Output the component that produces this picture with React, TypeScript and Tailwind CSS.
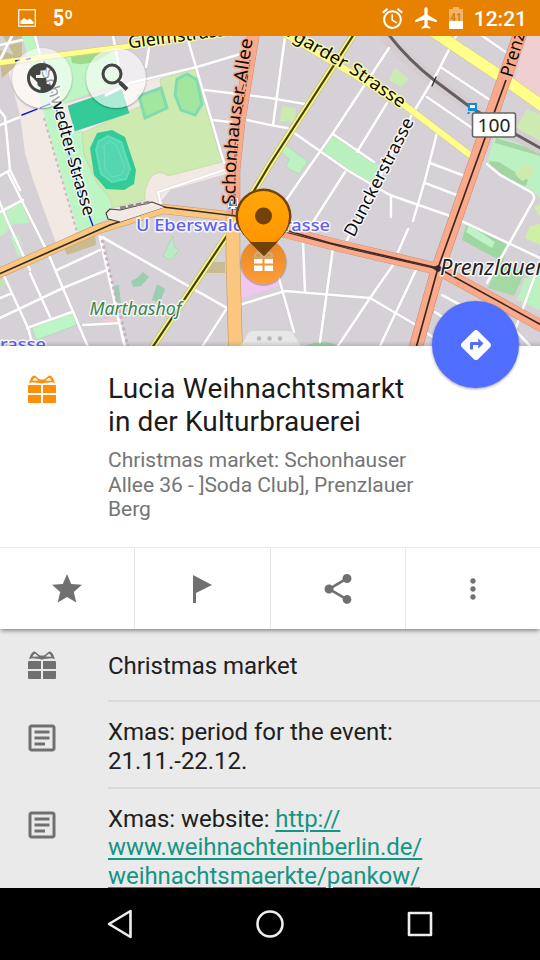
import type { ReactNode } from "react";
import {
  MdAccessAlarm,
  MdAirplanemodeActive,
  MdDirections,
  MdMoreVert,
  MdOutlineArticle,
  MdPublic,
  MdShare,
  MdStar,
} from "react-icons/md";

const STREETS = [
  "M149 48L146 67",
  "M188 40L224 163",
  "M113 36L122 82",
  "M106 95L130 83L197 67L247 52",
  "M205 90L270 98L305 104",
  "M213 120L237 123M247 120L270 125L287 128L347 170L390 195L453 217L540 258",
  "M285 37L273 125",
  "M389 48L333 133L300 180L283 205",
  "M387 103L357 152",
  "M333 134L374 162",
  "M345 172L313 222",
  "M457 34L437 73L413 113L347 240",
  "M442 68L493 102",
  "M427 97L472 128",
  "M481 35L507 53",
  "M437 133L425 180L413 221",
  "M430 163L470 178",
  "M408 229L398 252",
  "M425 183L462 197",
  "M391 195V217",
  "M487 164L500 175L531 192Q536 196 533 201L487 283",
  "M303 242L305 292",
  "M333 248L320 342",
  "M239 305L285 291L370 298L416 325",
  "M393 265L370 298L338 346",
  "M416 270L380 346",
  "M278 275L294 332",
  "M442 295L475 313M435 312L450 322M425 332L436 339M540 262L515 330L530 346",
  "M57 270L100 250",
  "M-2 319L63 288L107 270",
  "M-2 299L10 294",
  "M27 328L72 312",
  "M48 253L88 347",
  "M30 273L50 317",
  "M4 276L28 328L33 346",
  "M8 173L48 253",
  "M-2 198L7 220L30 270",
  "M-2 213L23 200",
  "M102 237L227 308L202 347",
  "M161 205L158 192L230 168",
  "M83 325L122 323",
  "M-2 108L5 117L10 170L-2 177M10 170L20 190",
  "M-2 126L20 117",
  "M35 36L42 62M12 36L0 60M0 45L22 40",
];

function MapLabel({
  d,
  id,
  length,
  size = 17.5,
  children,
}: {
  d: string;
  id: string;
  length: number;
  size?: number;
  children: string;
}) {
  return (
    <>
      <path id={id} d={d} fill="none" stroke="none" />
      <text fontSize={size} textLength={length} lengthAdjust="spacingAndGlyphs">
        <textPath href={"#" + id}>{children}</textPath>
      </text>
    </>
  );
}

function CityMap() {
  return (
    <svg viewBox="0 36 540 310" className="block h-[310px] w-[540px]">
      <rect y="36" width="540" height="310" fill="#d6d1d6" />

      {/* land use */}
      <path d="M7 67L40 60L79 231L56 243L33 180L25 153L20 115Z" fill="#f2e9e4" />
      <path d="M60 105L130 85L193 68L200 90L222 163L233 172L170 190L157 207L110 222L80 150Z" fill="#f2e9e4" />
      <path d="M22 36H34L41 61L115 50L122 82L62 104L68 131L83 131L92 172L110 198L111 217L78 232L45 118Z" fill="#bef5c4" />
      <path d="M71 57L115 50L97 61Q84 66 72 63Z" fill="#a0d98b" />
      <path d="M82 133L162 96L160 79L195 69L222 162L168 176Q160 169 151 177Q143 190 145 200L112 208L110 198L97 183L84 155Z" fill="#cdebb0" stroke="#b5cda0" strokeWidth=".5" />
      <path d="M68 106L121 88L129 113L75 131Z" fill="#33cc99" stroke="#2bb98a" strokeWidth=".5" />
      <path d="M97 133L112 130L125 137L136 170L134 184L124 190L106 189L94 175L90 148Z" fill="#33cc99" />
      <path d="M99 141L108 136L121 142L130 169L126 179L112 182L101 174L96 150Z" fill="#54d6b0" stroke="#62deb7" strokeWidth="2" />
      <path d="M104 145L110 141L117 146L125 168L121 175L112 177L105 169Z" fill="#54d6b0" stroke="#70dfbb" strokeWidth="1" />
      <path d="M139 96L161 88L167 108L145 118Z" fill="#a2e6a0" stroke="#80dcae" strokeWidth="3" />
      <path d="M177 79L187 74L197 80L202 104L195 115L181 110L175 95Z" fill="#a2e6a0" stroke="#80dcae" strokeWidth="3" />
      <path d="M3 36H22V60L2 78L0 62V50L14 55Z" fill="#c9bb91" />
      <path d="M2 207L22 201L29 223L14 224L2 236L-1 236V218Z" fill="#bcf2c1" />
      <path d="M10 236L19 235L25 259L18 256Z" fill="#bcf2c1" />
      <path d="M0 281L4 279V285L0 287Z" fill="#bce8a9" />
      <path d="M32 328L72 312L77 325L36 340Z" fill="#bef5c4" stroke="#a5d0a8" strokeWidth=".5" />
      <path d="M173 236L174 247L179 250L174 257L170 260L163 256Z" fill="#bbebc4" stroke="#a2cdaa" strokeWidth=".5" />
      <path d="M131 281L137 278L143 272L149 277L141 286L133 287Z" fill="#99cfaf" />
      <path d="M152 300L157 284L165 289L160 303Z" fill="#99cfaf" />
      <path d="M114 286L119 285L121 303L115 302Z" fill="#99cfaf" />
      <path d="M64 248L95 236L96 245L67 255Z" fill="#c9bb91" />
      <path d="M207 262H225V273H203Z" fill="#c9bb91" />
      <path d="M101 320L117 316L119 322H103Z" fill="#f0cccc" />
      <path d="M282 106L296 108L295 122L280 121Z" fill="#cdebb0" />
      <path d="M395 68L409 79L401 87L389 80Z" fill="#cdebb0" />
      <path d="M285 145L308 161L299 174L286 167L289 159L280 151Z" fill="#bcf2c1" stroke="#a6cdaa" strokeWidth=".5" />
      <path d="M333 136L380 166L372 186L347 170L323 152Z" fill="#baf0be" />
      <path d="M526 36H540V102L514 83Z" fill="#efcfd0" />
      <path d="M516 128L527 109L540 115V145L520 135Z" fill="#cdebb0" />
      <path d="M494 136L540 150V198L534 192L520 185L487 164Z" fill="#bcf2c1" />
      <path d="M496 138L540 151V156L495 143Z" fill="#a6d5a5" />
      <path d="M490 161L499 162L528 180L526 186L515 183L500 174L487 166Z" fill="#a3d5a2" />
      <path d="M515 174L521 166L534 166L533 176L522 181Z" fill="#cdebb0" />
      <path d="M530 226L540 224V245L525 238ZM534 207L540 204V216Z" fill="#cdf0a5" />
      <path d="M467 222L508 244L503 262L462 240Z" fill="#9ed7a2" />
      <path d="M469 225L495 242L492 248L480 241L466 232Z" fill="#bff2c6" />
      <path d="M499 262L525 272L514 296L488 288Z" fill="#a4d9a5" />
      <path d="M525 278L540 275V310L517 300Z" fill="#bcf2c1" />
      <path d="M241 267L275 268L279 286L241 299Z" fill="#efc7ef" />
      <path d="M304 346Q324 338 338 346Z" fill="#9bd5a3" />

      {/* railway */}
      <path d="M380 31C397 50 420 70 434 80L470 107L517 135L542 149" fill="none" stroke="#d6cbcf" strokeWidth="12" />

      {/* minor streets */}
      <g fill="none" strokeLinecap="round">
        {STREETS.map((d) => (
          <path key={d} d={d} stroke="#cdc8cc" strokeWidth="3.4" />
        ))}
        {STREETS.map((d) => (
          <path key={d} d={d} stroke="#fff" strokeWidth="2.6" />
        ))}
        <path d="M100 237L125 347" stroke="#fff" strokeWidth="3" />
        <path d="M102 240L128 347" stroke="#c9afc5" strokeWidth="3" strokeDasharray="3 3" strokeLinecap="butt" />
        <path d="M44 118L77 232" stroke="#cbb9c0" strokeWidth="2" strokeDasharray="3 3" strokeLinecap="butt" />
        <path d="M22 115L50 104M44 62L60 122L80 191L93 226" stroke="#1414df" strokeWidth="1.400" strokeDasharray="16 4" />
        <path d="M386 31C400 50 420 69 434 80L470 107L517 135L542 149" stroke="#606060" strokeWidth="3" />
        <path d="M432 86L436 77" stroke="#333" strokeWidth="1.300" />
      </g>

      {/* main roads */}
      <g fill="none" strokeLinejoin="round">
        <path d="M-2 63L130 46L200 31" stroke="#c9c37d" strokeWidth="6" />
        <path d="M-2 63L130 46L200 31" stroke="#ffff89" strokeWidth="5.200" />
        <path d="M15 61L34 58" stroke="#1414df" strokeWidth="1.300" strokeDasharray="5 6" />
        <path d="M280 31L343 68L403 104L482 164" stroke="#c9c37d" strokeWidth="7" />
        <path d="M280 31L343 68L403 104L482 164" stroke="#ffff89" strokeWidth="6.200" />
        <path d="M425 26L503 78L545 108" stroke="#c9c37d" strokeWidth="12" />
        <path d="M425 26L503 78L545 108" stroke="#ffff89" strokeWidth="11.200" />
        <path d="M356 31L270 164L230 231L152 348" stroke="#b8b278" strokeWidth="7" />
        <path d="M356 31L270 164L230 231L152 348" stroke="#f8f68a" strokeWidth="6" />
        <path d="M356 31L270 164L230 231L152 348" stroke="#45430f" strokeWidth="2.200" />
        <path d="M-3 274L98 229L163 209L236 217" stroke="#c39a63" strokeWidth="10" />
        <path d="M-3 274L98 229L163 209L236 217" stroke="#fbc780" strokeWidth="9" />
        <path d="M233 212V260L235.500 348" stroke="#c39a63" strokeWidth="14.500" />
        <path d="M233 212V260L235.500 348" stroke="#fbc780" strokeWidth="13.300" />
        <path d="M270 228L340 246L438 269L545 328" stroke="#c48976" strokeWidth="12" />
        <path d="M523 26L500 91L438 269L415 350" stroke="#c48976" strokeWidth="14" />
        <path d="M254 31L239 122L234 170V216" stroke="#c48976" strokeWidth="12.500" />
        <path d="M270 228L340 246L438 269L545 328" stroke="#faa98a" strokeWidth="11.200" />
        <path d="M523 26L500 91L438 269L415 350" stroke="#faa98a" strokeWidth="13" />
        <path d="M254 31L239 122L234 170V216" stroke="#faa98a" strokeWidth="11.700" />
        <path d="M-3 275L110 225L163 207L236 216" stroke="#382d22" strokeWidth="1.700" />
        <path d="M120 222L108 219L106 213L110 209L120 210L152 202L165 207" fill="#f2e9e4" stroke="#453f3c" strokeWidth="1.100" />
        <path d="M120 208L151 202" stroke="#888" strokeWidth="3" strokeDasharray="6 2" />
        <path d="M285 230L330 243L438 268L545 327" stroke="#3d2923" strokeWidth="1.600" />
        <path d="M285 232L350 249L438 269" stroke="#3d2923" strokeWidth="1.200" />
        <path d="M506 80L438 268L416 348" stroke="#3d2923" strokeWidth="1.700" />
        <path d="M248 70L242 90L238 140L232 216M250 60L244 100L235 145V210" stroke="#63453c" strokeWidth="1.100" strokeDasharray="12 3" />
        <path d="M432 268L438 265L445 269L438 272Z" fill="#3d2923" />
      </g>

      {/* stops */}
      <g fill="#168bd0">
        <path d="M468 103H477V111H468ZM468 112H470L469 114H467ZM475 112H477L478 114H476Z" />
        <path d="M470 105H475V108H470Z" fill="#fff" />
        <path d="M228 198H238V209H228Z" fill="#fff" />
        <path d="M229 199H237V206H229ZM229 207H231L230 209H228ZM235 207H237L238 209H236Z" />
        <path d="M231 201H235V204H231Z" fill="#fff" />
      </g>

      {/* names */}
      <g
        className="font-['Noto_Sans',sans-serif]"
        fill="#0c0c0c"
        stroke="#fff"
        strokeOpacity=".85"
        strokeWidth="2.800"
        strokeLinejoin="round"
        paintOrder="stroke"
      >
        <g stroke="#ffff9c">
          <MapLabel id="gleim" d="M129 48.500L245 33" length={108}>Gleimstrasse</MapLabel>
          <MapLabel id="stargarder" d="M262 21L303 46L350 73L420 122" length={164}>Stargarder Strasse</MapLabel>
        </g>
        <MapLabel id="schwedter" d="M41 71L53 107L69 166L85 220L91 245" length={152}>Schwedter Strasse</MapLabel>
        <g stroke="#faa98a">
          <MapLabel id="schonhauser" d="M235 205L236 165L240 121L254 30" length={167} size={18}>Schonhauser Allee</MapLabel>
          <MapLabel id="prenzlauerAllee" d="M512 78L537 -6" length={50} size={18}>Prenzl</MapLabel>
        </g>
        <MapLabel id="duncker" d="M354 238L382 184L419 112" length={131}>Dunckerstrasse</MapLabel>
        <text x="136" y="231" fontSize="17" fontWeight="500" fill="#6262ee" textLength="194" lengthAdjust="spacingAndGlyphs">
          U Eberswalder Strasse
        </text>
        <text x="0" y="349.500" fontSize="17" fontWeight="500" fill="#6262ee" textLength="46" lengthAdjust="spacingAndGlyphs">
          rasse
        </text>
        <text x="89.500" y="314.500" fontSize="18" fontStyle="italic" fill="#398650" textLength="92" lengthAdjust="spacingAndGlyphs">
          Marthashof
        </text>
        <text x="440" y="275" fontSize="22.500" fontStyle="italic" fill="#222" textLength="155" lengthAdjust="spacingAndGlyphs">
          Prenzlauer Berg
        </text>
      </g>
      <rect x="472.500" y="113" width="43" height="24" rx="2" fill="#fff" stroke="#666" strokeWidth="1.600" />
      <text x="494" y="131.500" textAnchor="middle" fontSize="18.500" fill="#222" textLength="33" lengthAdjust="spacingAndGlyphs" className="font-['Noto_Sans',sans-serif]">
        100
      </text>

      {/* selected place */}
      <defs>
        <linearGradient id="pinFill" x1="0" y1="0" x2="0" y2="1">
          <stop offset="0" stopColor="#ffa70a" />
          <stop offset="1" stopColor="#ff9500" />
        </linearGradient>
        <linearGradient id="poiFill" x1="0" y1="0" x2="0" y2="1">
          <stop offset="0" stopColor="#e48528" />
          <stop offset="1" stopColor="#ff9d34" />
        </linearGradient>
      </defs>
      <circle cx="263.500" cy="262.500" r="23.500" fill="#735b55" opacity=".35" />
      <circle cx="263.500" cy="261.500" r="22.500" fill="url(#poiFill)" />
      <path d="M254 259H262.500V263.500H254ZM264.500 259H273V263.500H264.500ZM254 265.500H262.500V271H254ZM264.500 265.500H273V271H264.500Z" fill="#fff" />
      <path d="M255 257.500Q254 255 258 252L263.500 257L269 252Q273 255 272 257.500Z" fill="none" stroke="#c7ad8b" strokeWidth="2" />
      <path d="M235.500 216.500A28 28 0 1 1 291.500 216.500Q291.500 227 279 240L264 256L248 240Q235.500 227 235.500 216.500Z" fill="#734209" />
      <path d="M238 216.500A25.500 25.500 0 1 1 289 216.500Q289 231 276 242H251Q238 231 238 216.500Z" fill="url(#pinFill)" />
      <path d="M249 241.500Q263.500 243.500 278 241.500L264 256Z" fill="#734209" />
      <circle cx="263.500" cy="216" r="8.500" fill="#734209" />

      {/* drawer handle */}
      <path d="M239 346Q243 344 247 335Q249 331 253 331H288Q292 331 294 335L301 346Z" fill="#e7e7e7" />
      <g fill="#b8b8b8">
        <circle cx="259" cy="338.500" r="2.200" />
        <circle cx="269.500" cy="338.500" r="2.200" />
        <circle cx="280" cy="338.500" r="2.200" />
      </g>
      <defs>
        <linearGradient id="edge" x1="0" y1="0" x2="0" y2="1">
          <stop offset="0" stopColor="#000" stopOpacity="0" />
          <stop offset="1" stopColor="#000" stopOpacity=".13" />
        </linearGradient>
      </defs>
      <rect y="341" width="540" height="5" fill="url(#edge)" />
    </svg>
  );
}

function GiftIcon({ className }: { className: string }) {
  return (
    <svg viewBox="0 0 28 29" className={"h-[29px] w-7 " + className} fill="currentColor">
      <path d="M1 10H13V18H0V11Q0 10 1 10ZM15 10H27Q28 10 28 11V18H15ZM0 20H13V28H1Q0 28 0 27ZM15 20H28V27Q28 28 27 28H15Z" />
      <path
        fillRule="evenodd"
        d="M1.200 8.300C2 4 4 .8 6.300.4C7.500.4 10 3.200 12.200 4.500H15.800C18 3.200 20.500.4 21.700.4C24 .8 26 4 26.800 8.300L24 7.300L16 7.900C14.500 8.800 13.500 8.800 12 7.900L4 7.300ZM4.500 5.800L10.500 5.400C9 4.200 7.800 3 6.800 2.800C5.800 3.200 5 4.500 4.500 5.800ZM23.500 5.800L17.500 5.400C19 4.200 20.200 3 21.200 2.800C22.200 3.200 23 4.500 23.500 5.800Z"
      />
    </svg>
  );
}

function StatusBar() {
  return (
    <header className="flex h-9 shrink-0 items-center bg-[#e68200] pr-[13px] pl-[18px] text-white">
      <svg viewBox="0 0 18 18" className="h-[18px] w-[18px]">
        <rect x=".75" y=".75" width="16.500" height="16.500" fill="none" stroke="#fff" strokeWidth="1.200" />
        <path d="M2.500 15V12L6 9L9 11L12 9.500L15.500 13V15Z" fill="#fff" />
      </svg>
      <svg viewBox="0 0 24 26" className="ml-4 h-[26px] w-6">
        <text x="1" y="21" fontSize="23" fontWeight="700" fill="#fff" textLength="20" lengthAdjust="spacingAndGlyphs" className="font-[Roboto,sans-serif]">
          5º
        </text>
      </svg>
      <div className="ml-auto flex items-center">
        <MdAccessAlarm className="h-[25px] w-[25px]" />
        <MdAirplanemodeActive className="ml-2 h-[26px] w-[26px]" />
        <svg viewBox="0 0 14 22" className="ml-[10px] h-[22px] w-[14px]">
          <path d="M4 0H10V2H13Q14 2 14 3V21Q14 22 13 22H1Q0 22 0 21V3Q0 2 1 2H4Z" fill="#f0b46a" />
          <path d="M0 14H14V21Q14 22 13 22H1Q0 22 0 21Z" fill="#fff" />
          <text x="7" y="14" textAnchor="middle" fontSize="10" fontWeight="700" fill="#d67d0b" className="font-[Roboto,sans-serif]">
            41
          </text>
        </svg>
        <span className="mt-0.5 ml-[11px] text-[21px] leading-none font-medium">12:21</span>
      </div>
    </header>
  );
}

function RoundMapButton({ children }: { children: ReactNode }) {
  return (
    <button className="flex h-[60px] w-[60px] items-center justify-center rounded-full bg-white/60 text-[#444] shadow-[0_1px_2px_rgba(0,0,0,0.35)]">
      {children}
    </button>
  );
}

function InfoRow({ icon, children, first }: { icon: ReactNode; children: ReactNode; first?: boolean }) {
  return (
    <div className="flex">
      <div className={"flex w-[108px] shrink-0 items-start pl-6 " + (first ? "pt-[22px]" : "pt-[18px]")}>{icon}</div>
      <div
        className={
          "flex-1 border-b-2 border-[#dadada] pr-24 text-[24px] leading-[28.500px] tracking-[-0.05px] text-[#202020] " +
          (first ? "pt-[23px] pb-[19.500px]" : "pt-[16px] pb-[11.500px]")
        }
      >
        {children}
      </div>
    </div>
  );
}

export default function App() {
  return (
    <div className="relative flex h-[960px] w-[540px] flex-col overflow-hidden bg-white font-[Roboto,sans-serif]">
      <StatusBar />
      <section className="relative h-[310px] shrink-0">
        <CityMap />
        <div className="absolute top-3 left-3 flex gap-[14px]">
          <RoundMapButton>
            <MdPublic className="h-9 w-9" />
          </RoundMapButton>
          <RoundMapButton>
            <svg viewBox="0 0 36 36" className="h-9 w-9" fill="none" stroke="#444">
              <circle cx="14" cy="14" r="9" strokeWidth="3" />
              <path d="M20 20.500L22.500 23" strokeWidth="2.500" />
              <path d="M22 22.500L29 29.500" strokeWidth="4" />
            </svg>
          </RoundMapButton>
        </div>
        <button className="absolute top-[265px] left-[432px] z-10 flex h-[87px] w-[87px] items-center justify-center rounded-full bg-[#506eff] text-white shadow-[0_1px_3px_rgba(0,0,0,0.4)]">
          <MdDirections className="h-9 w-9" />
        </button>
      </section>

      <section className="flex h-[201px] shrink-0">
        <div className="w-[108px] shrink-0 pt-[29px] pl-7">
          <GiftIcon className="text-[#ff8f0a]" />
        </div>
        <div className="pt-[26px]">
          <h1 className="text-[28px] leading-[33px] text-[#1b1b1b]">
            <span className="tracking-[0.21px]">Lucia Weihnachtsmarkt</span>
            <br />
            <span className="tracking-[0.1px]">in der Kulturbrauerei</span>
          </h1>
          <p className="mt-[10px] text-[21px] leading-[24.500px] tracking-[-0.03px] text-[#757575]">
            Christmas market: Schonhauser
            <br />
            Allee 36 - ]Soda Club], Prenzlauer
            <br />
            Berg
          </p>
        </div>
      </section>

      <nav className="relative z-[1] grid h-[82px] shrink-0 grid-cols-[135px_135.5px_135.5px_1fr] border-t border-[#ebebeb] bg-white text-[#707070] shadow-[0_3px_4px_-1px_rgba(0,0,0,0.4)]">
        <button className="flex items-center justify-center border-r border-[#e6e6e6]">
          <MdStar className="h-9 w-9" />
        </button>
        <button className="flex items-center justify-center border-r border-[#e6e6e6]">
          <svg viewBox="0 0 20 28" className="h-7 w-5" fill="currentColor">
            <path d="M1 0L20 10L4 18V28H1Z" />
          </svg>
        </button>
        <button className="flex items-center justify-center border-r border-[#e6e6e6]">
          <MdShare className="h-9 w-9" />
        </button>
        <button className="flex items-center justify-center">
          <MdMoreVert className="h-8 w-8" />
        </button>
      </nav>

      <section className="h-[259px] shrink-0 overflow-hidden bg-[#eaeaea] text-[#707070]">
        <InfoRow first icon={<GiftIcon className="ml-1" />}>
          Christmas market
        </InfoRow>
        <InfoRow icon={<MdOutlineArticle className="h-9 w-9" />}>
          Xmas: period for the event:
          <br />
          21.11.-22.12.
        </InfoRow>
        <InfoRow icon={<MdOutlineArticle className="h-9 w-9" />}>
          Xmas: website:{" "}
          <a className="text-[#159583] underline decoration-[1.5px] underline-offset-[3px]">
            http://
            <br />
            www.weihnachteninberlin.de/
            <br />
            weihnachtsmaerkte/pankow/
          </a>
        </InfoRow>
      </section>

      <footer className="flex h-[72px] items-center justify-between bg-black px-[105px] text-[#eee]">
        {["M4 15L25.500 2V28Z", "M2.500 15A12.500 12.500 0 1 0 27.500 15A12.500 12.500 0 1 0 2.500 15Z", "M4 4H26V26H4Z"].map((d) => (
          <svg key={d} viewBox="0 0 30 30" className="h-[30px] w-[30px]" fill="none" stroke="currentColor" strokeWidth="2.600" strokeLinejoin="round">
            <path d={d} />
          </svg>
        ))}
      </footer>
    </div>
  );
}
